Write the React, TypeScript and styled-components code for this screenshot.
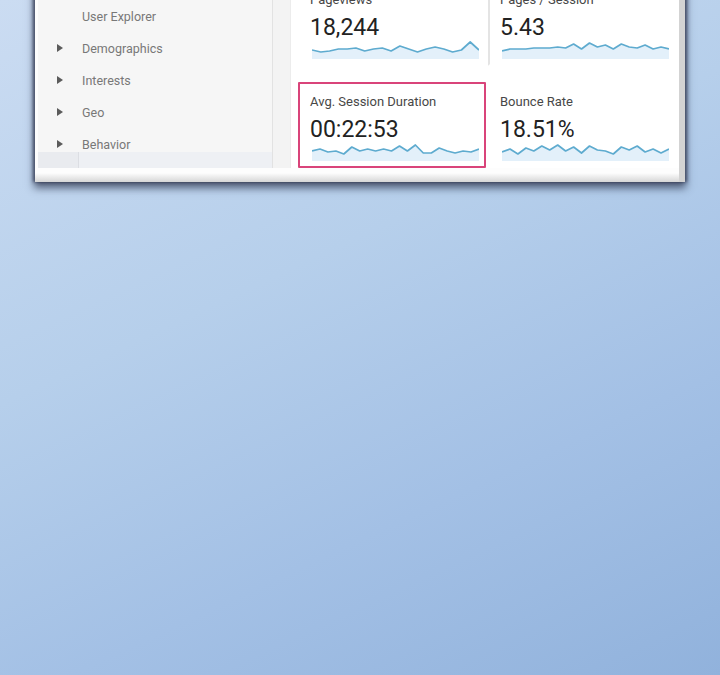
import styled, { createGlobalStyle } from "styled-components";

const GlobalStyle = createGlobalStyle`
  html, body {
    margin: 0;
    padding: 0;
  }
  body {
    font-family: Roboto, "Liberation Sans", Arial, sans-serif;
  }
`;

const Page = styled.div`
  width: 720px;
  height: 675px;
  overflow: hidden;
  background: linear-gradient(155deg, #cbdcf2 0%, #b6cfeb 40%, #a3c0e5 70%, #91b2dc 100%);
`;

const Frame = styled.div`
  width: 641px;
  margin: -24px 0 0 35px;
  padding: 0 6px 14px 3px;
  background: linear-gradient(to bottom, #fdfdfd calc(100% - 9px), #d6d6d6);
  box-shadow:
    -2px 0 3px rgba(55, 62, 85, 0.75),
    2px 0 3px rgba(55, 62, 85, 0.75),
    0 5px 8px 1px rgba(45, 55, 80, 0.75),
    inset -6px 0 0 #d3d3d3;
`;

const Body = styled.div`
  display: flex;
  height: 192px;
`;

const Sidebar = styled.aside`
  width: 234px;
  display: flex;
  flex-direction: column;
  background: #f6f6f6;
  border-right: 1px solid #e2e2e2;
`;

const NavList = styled.ul`
  list-style: none;
  margin: 0;
  padding: 24px 0 0;
  height: 176px;
  box-sizing: border-box;
  overflow: hidden;
`;

const NavItem = styled.li`
  display: flex;
  align-items: center;
  height: 32px;
  color: #787878;
  font-size: 12.5px;
`;

const Caret = styled.span<{ $hidden?: boolean }>`
  width: 0;
  height: 0;
  margin: 0 19px 0 19px;
  border-top: 4px solid transparent;
  border-bottom: 4px solid transparent;
  border-left: 6px solid ${(p) => (p.$hidden ? "transparent" : "#5b5b5b")};
`;

const SideFooter = styled.div`
  display: flex;
  height: 16px;
  background: #eef0f4;
`;

const FooterCell = styled.div`
  width: 40px;
  background: #e9ebef;
  border-right: 1px solid #dcdee3;
`;

const Gutter = styled.div`
  width: 17px;
  background: #f3f3f3;
  border-right: 1px solid #ececec;
`;

const Content = styled.main`
  flex: 1;
  background: #fff;
  padding: 4px 0 0 7px;
  display: grid;
  grid-template-columns: 188px 185px;
  grid-auto-rows: 86px;
  column-gap: 2px;
  row-gap: 16px;
`;

const Card = styled.div<{ $active?: boolean; $divider?: boolean }>`
  box-sizing: border-box;
  padding: 0 10px;
  border: 2px solid ${(p) => (p.$active ? "#d9447a" : "transparent")};
  border-left-color: ${(p) => (p.$active ? "#d9447a" : p.$divider ? "#e4e4e4" : "transparent")};
  border-radius: 1px;
`;

const Label = styled.div`
  margin-top: 10px;
  height: 16px;
  line-height: 16px;
  font-size: 13px;
  color: #474747;
  white-space: nowrap;
`;

const Value = styled.div`
  margin-top: 6px;
  height: 28px;
  line-height: 28px;
  font-size: 23px;
  color: #222;
`;

const Spark = styled.svg`
  display: block;
  margin: -1px 0 0 2px;
  width: 167px;
  height: 18px;
`;

type Metric = { label: string; value: string; data: number[]; active?: boolean; divider?: boolean };

const metrics: Metric[] = [
  {
    label: "Pageviews",
    value: "18,244",
    data: [9, 11, 10, 8, 8, 7, 10, 8, 7, 10, 5, 8, 11, 8, 6, 8, 11, 9, 1, 9],
  },
  {
    label: "Pages / Session",
    value: "5.43",
    data: [10, 8, 8, 8, 7, 7, 7, 6, 7, 3, 8, 2, 6, 4, 8, 3, 6, 7, 4, 8, 6, 8],
    divider: true,
  },
  {
    label: "Avg. Session Duration",
    value: "00:22:53",
    data: [8, 6, 9, 8, 11, 4, 8, 6, 8, 6, 8, 3, 8, 2, 10, 10, 5, 8, 10, 8, 9, 6],
    active: true,
  },
  {
    label: "Bounce Rate",
    value: "18.51%",
    data: [9, 6, 11, 5, 8, 3, 7, 2, 8, 4, 10, 3, 7, 8, 11, 4, 7, 3, 9, 6, 10, 6],
  },
];

const Sparkline = ({ data }: { data: number[] }) => {
  const step = 167 / (data.length - 1);
  const pts = data.map((y, i) => `${(i * step).toFixed(1)},${y}`).join(" ");
  return (
    <Spark viewBox="0 0 167 18" preserveAspectRatio="none">
      <polygon points={`0,18 ${pts} 167,18`} fill="#e3f0fa" />
      <polyline points={pts} fill="none" stroke="#5eabcf" strokeWidth="1.7" strokeLinejoin="round" />
    </Spark>
  );
};

const navItems = [
  { name: "User Explorer", caret: false },
  { name: "Demographics", caret: true },
  { name: "Interests", caret: true },
  { name: "Geo", caret: true },
  { name: "Behavior", caret: true },
];

export default function App() {
  return (
    <Page>
      <GlobalStyle />
      <Frame>
        <Body>
          <Sidebar>
            <NavList>
              {navItems.map((item) => (
                <NavItem key={item.name}>
                  <Caret $hidden={!item.caret} />
                  {item.name}
                </NavItem>
              ))}
            </NavList>
            <SideFooter>
              <FooterCell />
            </SideFooter>
          </Sidebar>
          <Gutter />
          <Content>
            {metrics.map((m) => (
              <Card key={m.label} $active={m.active} $divider={m.divider}>
                <Label>{m.label}</Label>
                <Value>{m.value}</Value>
                <Sparkline data={m.data} />
              </Card>
            ))}
          </Content>
        </Body>
      </Frame>
    </Page>
  );
}
